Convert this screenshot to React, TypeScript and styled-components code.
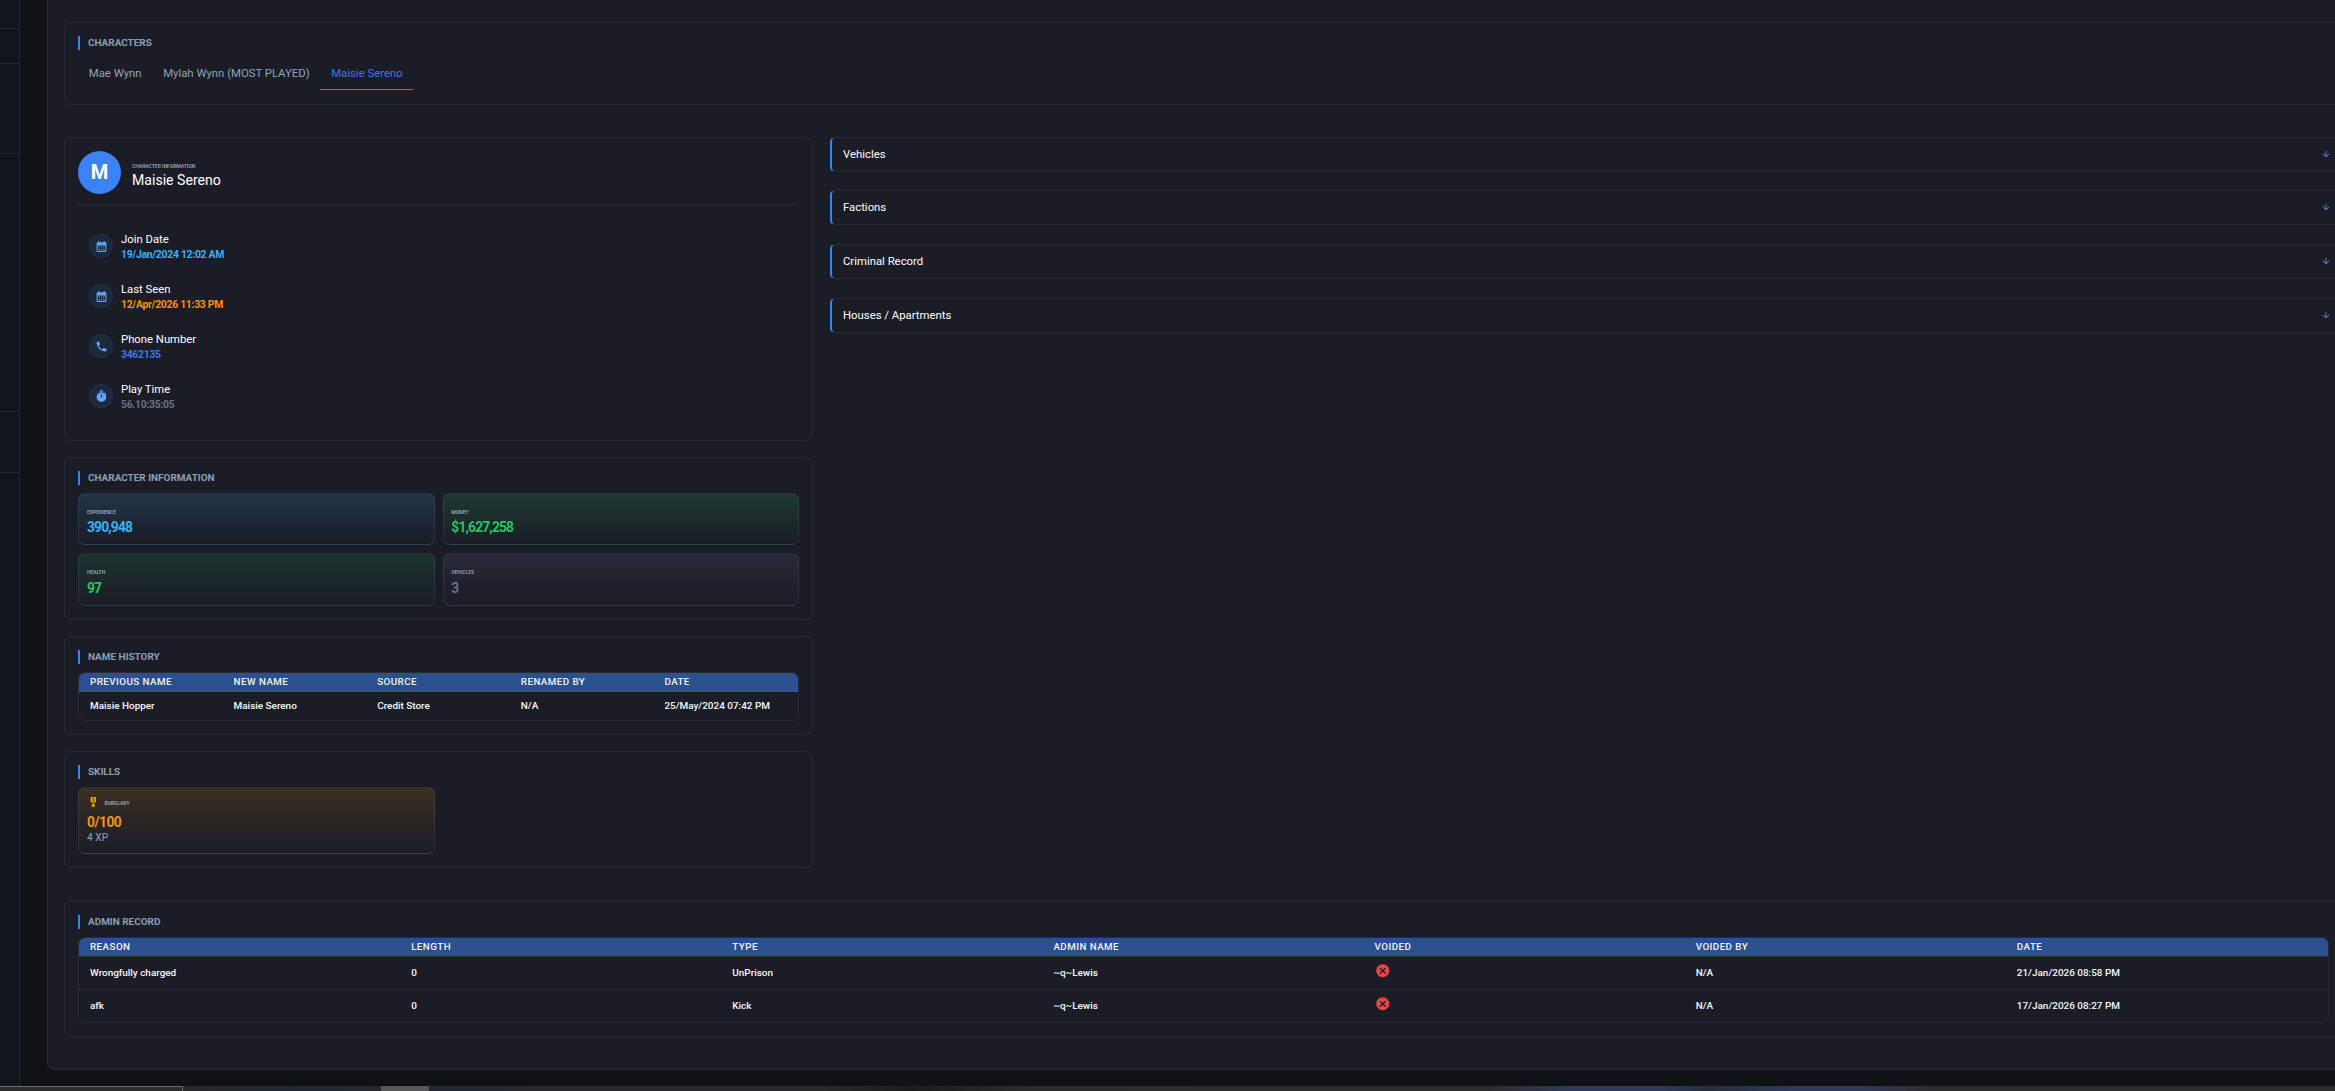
import React from 'react';
import styled, { createGlobalStyle } from 'styled-components';

const GlobalStyle = createGlobalStyle`
  * { box-sizing: border-box; }
  html, body { margin: 0; background: #101115; overflow: hidden; }
  body { font-family: Roboto, sans-serif; color: #f1f5f9; }
`;

const line = '#292b36';
const surface = '#1a1c26';

const Screen = styled.div`
  display: flex;
  flex-direction: column;
  height: 1091px;
  overflow: hidden;
`;

const Workspace = styled.div`
  display: flex;
  height: 1086px;
  flex: none;
  overflow: hidden;
`;

const Sidebar = styled.aside`
  width: 20px;
  flex: none;
  background: #10141c;
  border-right: 1px solid #24272d;
`;

const SidebarGroup = styled.div<{ $height: number }>`
  height: ${p => p.$height}px;
  border-bottom: 1px solid #24282f;
`;

const Main = styled.main`
  flex: none;
  width: 2340px;
  padding-left: 27px;
`;

const Panel = styled.div`
  width: 2313px;
  height: 1070px;
  padding: 22px 16px 0 16px;
  background: ${surface};
  border: 1px solid ${line};
  border-top: 0;
  border-radius: 0 0 7px 7px;
`;

const Card = styled.section<{ $height: number; $top?: number }>`
  height: ${p => p.$height}px;
  padding: ${p => p.$top ?? 13}px 13px 13px;
  border: 1px solid ${line};
  border-radius: 7px;
`;

const CardTitle = styled.h2`
  display: flex;
  align-items: center;
  height: 14px;
  margin: 0 0 8px;
  padding-left: 8px;
  border-left: 2px solid #3b82f6;
  color: #8b9fb4;
  font-size: 9.95px;
  font-weight: 700;
  line-height: 14px;
`;

const Tabs = styled.div`
  display: flex;
`;

const Tab = styled.button<{ $active?: boolean }>`
  height: 32px;
  padding: 0 10.8px;
  border: 0;
  border-bottom: 1px solid ${p => (p.$active ? '#3b82f6' : 'transparent')};
  background: none;
  color: ${p => (p.$active ? '#3b76f6' : '#94a3b8')};
  font: 400 11.33px/31px Roboto, sans-serif;
  white-space: nowrap;
`;

const Columns = styled.div`
  display: grid;
  grid-template-columns: 749px 1513px;
  column-gap: 17px;
  margin: 32px 0;
`;

const Stack = styled.div`
  display: flex;
  flex-direction: column;
  gap: 16px;
`;

const Profile = styled.header`
  display: flex;
  align-items: center;
  gap: 11px;
  height: 54px;
  padding-bottom: 10px;
  border-bottom: 1px solid ${line};
`;

const Avatar = styled.div`
  width: 43px;
  height: 43px;
  border-radius: 50%;
  background: #3b82f6;
  color: #fff;
  font-size: 20px;
  font-weight: 700;
  line-height: 42px;
  text-align: center;
`;

const ProfileText = styled.div`
  padding-top: 7px;
`;

const Micro = styled.div`
  color: #a3b1c4;
  font-size: 5px;
  font-weight: 500;
  line-height: 8px;
`;

const ProfileName = styled.div`
  color: #fff;
  font-size: 14.1px;
  font-weight: 400;
  line-height: 20px;
`;

const Facts = styled.ul`
  margin: 16px 0 0;
  padding: 0 0 0 11px;
  list-style: none;
`;

const Fact = styled.li`
  display: flex;
  align-items: center;
  gap: 8px;
  height: 50px;
`;

const FactIcon = styled.div`
  display: grid;
  place-items: center;
  width: 24px;
  height: 24px;
  border: 1px solid #1f3557;
  border-radius: 50%;
  background: #1d283b;
  color: #60a5fa;
`;

const FactText = styled.div`
  padding: 1px 0;
`;

const FactLabel = styled.div`
  color: #fff;
  font-size: 11.3px;
  font-weight: 400;
  line-height: 16px;
`;

const FactValue = styled.div<{ $color: string }>`
  color: ${p => p.$color};
  font-size: 10.4px;
  font-weight: 700;
  letter-spacing: -0.28px;
  line-height: 13px;
`;

const StatGrid = styled.div<{ $rows: string }>`
  display: grid;
  grid-template-columns: 357px 356px;
  grid-template-rows: ${p => p.$rows};
  gap: 8px;
`;

const Stat = styled.div<{ $tint: string; $edge: string }>`
  padding: 14px 8px 0;
  border: 1px solid rgba(148, 163, 184, 0.14);
  border-bottom-color: ${p => p.$edge};
  border-radius: 7px;
  background: linear-gradient(180deg, ${p => p.$tint}, ${surface});

  &:nth-child(even) {
    padding-left: 7.3px;
  }
`;

const StatValue = styled.div<{ $color: string; $spacing?: number; $drop?: number }>`
  margin-top: ${p => p.$drop ?? 1}px;
  color: ${p => p.$color};
  font-size: 13.8px;
  font-weight: 700;
  letter-spacing: ${p => p.$spacing ?? -0.82}px;
  line-height: 20px;
`;

const Skill = styled(Stat)`
  padding-top: 8px;
`;

const SkillHead = styled.div`
  display: flex;
  align-items: center;
  gap: 5px;
  height: 13px;
  margin-bottom: 3px;
  color: #f5a70b;
`;

const SkillNote = styled.div`
  color: #94a3b8;
  font-size: 10.2px;
  line-height: 12px;
`;

const Table = styled.div`
  border: 1px solid ${line};
  border-radius: 7px;
  overflow: hidden;
`;

const TableHead = styled.div<{ $cols: number; $height: number; $edge: string }>`
  display: grid;
  grid-template-columns: repeat(${p => p.$cols}, 1fr);
  align-items: center;
  height: ${p => p.$height}px;
  padding: 0 0 1px 11px;
  margin-right: -10px;
  background: #2b4f8f;
  border-bottom: 1px solid ${p => p.$edge};
  color: #f1f5f9;
  font-size: 9.8px;
  font-weight: 500;
  letter-spacing: 0.44px;
  line-height: 11px;
`;

const TableRow = styled.div<{ $cols: number; $height: number }>`
  display: grid;
  grid-template-columns: repeat(${p => p.$cols}, 1fr);
  align-items: center;
  height: ${p => p.$height}px;
  padding: 0 0 1px 11px;
  margin-right: -10px;
  color: #f8fafc;
  font-size: 9.93px;
  font-weight: 500;
  line-height: 11px;

  & + & {
    border-top: 1px solid ${line};
  }
`;

const VoidIcon = styled.svg`
  display: block;
  width: 15.5px;
  height: 15.5px;
  margin-bottom: 4px;
  fill: #ef4444;
`;

const Accordions = styled.div`
  display: flex;
  flex-direction: column;
  gap: 19px;
`;

const Accordion = styled.div`
  display: flex;
  align-items: center;
  justify-content: space-between;
  height: 35px;
  padding: 0 11px 1px 11px;
  border: 1px solid ${line};
  border-left: 2px solid #3b82f6;
  border-radius: 5px;
  font-size: 11.33px;
  font-weight: 400;
  line-height: 14px;
  color: #fff;

  &:first-child {
    margin-bottom: -1px;
  }
`;

const Taskbar = styled.div`
  display: flex;
  flex: none;
  height: 5px;
  background: linear-gradient(90deg, #262829 183px, #1f2732 300px, #25292d 381px, #1f2732 440px, #27292b 560px, #29292a 820px, #1c1c1c 910px, #2c2c2d 1040px, #2d2d2e 1490px, #30395a 1570px, #30395a 1660px, #282e3c 1710px, #30395a 1790px, #30395a 1860px, #2d2d2e 1930px);
`;

const TaskWindow = styled.div`
  width: 183px;
  margin-right: 198px;
  background: #2e2e2f;
  border-top: 1px solid #6a6a6a;
  border-right: 1px solid #6a6a6a;
`;

const TaskButton = styled.div`
  width: 48px;
  background: #575758;
`;

const glyphs = {
  calendar:
    'M19 4h-1V2h-2v2H8V2H6v2H5c-1.11 0-1.99.9-1.99 2L3 20a2 2 0 0 0 2 2h14c1.1 0 2-.9 2-2V6c0-1.1-.9-2-2-2zm0 16H5V10h14v10zM9 14H7v-2h2v2zm4 0h-2v-2h2v2zm4 0h-2v-2h2v2zm-8 4H7v-2h2v2zm4 0h-2v-2h2v2zm4 0h-2v-2h2v2z',
  phone:
    'M6.62 10.79c1.44 2.83 3.76 5.14 6.59 6.59l2.2-2.2c.27-.27.67-.36 1.02-.24 1.12.37 2.33.57 3.57.57.55 0 1 .45 1 1V20c0 .55-.45 1-1 1-9.39 0-17-7.61-17-17 0-.55.45-1 1-1h3.5c.55 0 1 .45 1 1 0 1.25.2 2.45.57 3.57.11.35.03.74-.25 1.02l-2.2 2.2z',
  timer:
    'M9 1h6v2H9zm10.03 6.39 1.42-1.42c-.43-.51-.9-.99-1.41-1.41l-1.42 1.42A8.962 8.962 0 0 0 12 4c-4.97 0-9 4.03-9 9s4.02 9 9 9a8.994 8.994 0 0 0 7.03-14.61zM13 14h-2V8h2v6z',
  medal:
    'M17 10.43V2H7v8.43c0 .35.18.68.49.86l4.18 2.51-.99 2.34-3.41.29 2.59 2.24L9.07 22 12 20.23 14.93 22l-.78-3.33 2.59-2.24-3.41-.29-.99-2.34 4.18-2.51c.3-.18.48-.5.48-.86zm-4 1.8-1 .6-1-.6V3h2v9.23z',
  cancel:
    'M12 2C6.47 2 2 6.47 2 12s4.47 10 10 10 10-4.47 10-10S17.53 2 12 2zm5 13.59L15.59 17 12 13.41 8.41 17 7 15.59 10.59 12 7 8.41 8.41 7 12 10.59 15.59 7 17 8.41 13.41 12 17 15.59z',
  down: 'M20 12l-1.41-1.41L13 16.17V4h-2v12.17l-5.58-5.59L4 12l8 8 8-8z',
};

function Glyph({ name, size, color = 'currentColor' }: { name: keyof typeof glyphs; size: number; color?: string }) {
  return (
    <svg width={size} height={size} viewBox="0 0 24 24" fill={color}>
      <path d={glyphs[name]} />
    </svg>
  );
}

const facts: { icon: keyof typeof glyphs; label: string; value: string; color: string }[] = [
  { icon: 'calendar', label: 'Join Date', value: '19/Jan/2024 12:02 AM', color: '#38b0f8' },
  { icon: 'calendar', label: 'Last Seen', value: '12/Apr/2026 11:33 PM', color: '#f5920f' },
  { icon: 'phone', label: 'Phone Number', value: '3462135', color: '#3b76f6' },
  { icon: 'timer', label: 'Play Time', value: '56.10:35:05', color: '#64748b' },
];

const stats = [
  { label: 'EXPERIENCE', value: '390,948', color: '#38b0f8', tint: '#203548', edge: '#2b4356', drop: 1 },
  { label: 'MONEY', value: '$1,627,258', color: '#22c55e', tint: '#1d3a30', edge: '#2a4745', drop: 1 },
  { label: 'HEALTH', value: '97', color: '#22c55e', tint: '#1c342f', edge: '#2a4046', drop: 2 },
  { label: 'VEHICLES', value: '3', color: '#64748b', tint: '#272a36', edge: '#343744', drop: 2 },
];

const nameHistory = {
  head: ['PREVIOUS NAME', 'NEW NAME', 'SOURCE', 'RENAMED BY', 'DATE'],
  row: ['Maisie Hopper', 'Maisie Sereno', 'Credit Store', 'N/A', '25/May/2024 07:42 PM'],
};

const adminHead = ['REASON', 'LENGTH', 'TYPE', 'ADMIN NAME', 'VOIDED', 'VOIDED BY', 'DATE'];
const adminRows = [
  ['Wrongfully charged', '0', 'UnPrison', '~q~Lewis', null, 'N/A', '21/Jan/2026 08:58 PM'],
  ['afk', '0', 'Kick', '~q~Lewis', null, 'N/A', '17/Jan/2026 08:27 PM'],
];

export default function App() {
  return (
    <Screen>
      <GlobalStyle />
      <Workspace>
        <Sidebar>
          {[29, 35, 90, 258, 61].map((h, i) => (
            <SidebarGroup key={i} $height={h} />
          ))}
        </Sidebar>
        <Main>
          <Panel>
            <Card $height={83}>
              <CardTitle>CHARACTERS</CardTitle>
              <Tabs>
                <Tab>Mae Wynn</Tab>
                <Tab>Mylah Wynn (MOST PLAYED)</Tab>
                <Tab $active>Maisie Sereno</Tab>
              </Tabs>
            </Card>

            <Columns>
              <Stack>
                <Card $height={304}>
                  <Profile>
                    <Avatar>M</Avatar>
                    <ProfileText>
                      <Micro>CHARACTER INFORMATION</Micro>
                      <ProfileName>Maisie Sereno</ProfileName>
                    </ProfileText>
                  </Profile>
                  <Facts>
                    {facts.map(f => (
                      <Fact key={f.label}>
                        <FactIcon>
                          <Glyph name={f.icon} size={13} />
                        </FactIcon>
                        <FactText>
                          <FactLabel>{f.label}</FactLabel>
                          <FactValue $color={f.color}>{f.value}</FactValue>
                        </FactText>
                      </Fact>
                    ))}
                  </Facts>
                </Card>

                <Card $height={163}>
                  <CardTitle>CHARACTER INFORMATION</CardTitle>
                  <StatGrid $rows="52px 53px">
                    {stats.map(s => (
                      <Stat key={s.label} $tint={s.tint} $edge={s.edge}>
                        <Micro>{s.label}</Micro>
                        <StatValue $color={s.color} $drop={s.drop}>{s.value}</StatValue>
                      </Stat>
                    ))}
                  </StatGrid>
                </Card>

                <Card $height={99}>
                  <CardTitle>NAME HISTORY</CardTitle>
                  <Table>
                    <TableHead $cols={5} $height={19} $edge="#3a5b9a">
                      {nameHistory.head.map(h => (
                        <span key={h}>{h}</span>
                      ))}
                    </TableHead>
                    <TableRow $cols={5} $height={28}>
                      {nameHistory.row.map(c => (
                        <span key={c}>{c}</span>
                      ))}
                    </TableRow>
                  </Table>
                </Card>

                <Card $height={117}>
                  <CardTitle>SKILLS</CardTitle>
                  <StatGrid $rows="67px">
                    <Skill $tint="#3a2f22" $edge="#45413f">
                      <SkillHead>
                        <Glyph name="medal" size={12.5} />
                        <Micro>BURGLARY</Micro>
                      </SkillHead>
                      <StatValue $color="#f5920f" $spacing={-0.5}>0/100</StatValue>
                      <SkillNote>4 XP</SkillNote>
                    </Skill>
                  </StatGrid>
                </Card>
              </Stack>

              <Accordions>
                {['Vehicles', 'Factions', 'Criminal Record', 'Houses / Apartments'].map(t => (
                  <Accordion key={t}>
                    <span>{t}</span>
                    <Glyph name="down" size={10} color="#5193e6" />
                  </Accordion>
                ))}
              </Accordions>
            </Columns>

            <Card $height={137} $top={14}>
              <CardTitle>ADMIN RECORD</CardTitle>
              <Table>
                <TableHead $cols={7} $height={19} $edge="#2d3242">
                  {adminHead.map(h => (
                    <span key={h}>{h}</span>
                  ))}
                </TableHead>
                {adminRows.map((row, r) => (
                  <TableRow key={r} $cols={7} $height={r ? 33 : 32}>
                    {row.map((c, i) =>
                      c === null ? (
                        <VoidIcon key={i} viewBox="0 0 24 24">
                          <path d={glyphs.cancel} />
                        </VoidIcon>
                      ) : (
                        <span key={i}>{c}</span>
                      ),
                    )}
                  </TableRow>
                ))}
              </Table>
            </Card>
          </Panel>
        </Main>
      </Workspace>
      <Taskbar>
        <TaskWindow />
        <TaskButton />
      </Taskbar>
    </Screen>
  );
}
